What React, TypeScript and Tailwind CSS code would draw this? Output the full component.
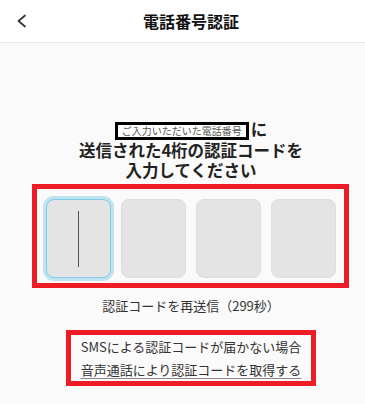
const font = { fontFamily: '"Noto Sans CJK JP", "Noto Sans", sans-serif' };

function CodeBox({ active }: { active?: boolean }) {
  return (
    <div
      className={
        "flex h-[79px] w-[65px] items-center justify-center rounded-[8px] border bg-[#e4e4e4] " +
        (active
          ? "border-[#7ccbea] ring-[3px] ring-[#bfe3ef]"
          : "border-[#dcdde2]")
      }
    >
      {active && <div className="h-[56px] w-[1.5px] bg-[#555]" />}
    </div>
  );
}

export default function App() {
  return (
    <div className="min-h-screen w-full overflow-hidden bg-[#fafafa]" style={font}>
      <div className="w-[382px]">
        {/* Header */}
        <header className="relative flex h-[43px] items-center justify-center border-b border-[#e8e8e8] bg-white">
          <svg
            className="absolute left-[16px] top-[14px] h-[14px] w-[12px]"
            viewBox="0 0 12 14"
            fill="none"
            stroke="#333"
            strokeWidth={1.7}
            strokeLinecap="round"
            strokeLinejoin="round"
          >
            <polyline points="9,1.5 2.5,7 9,12.5" />
          </svg>
          <h1 className="text-[16px] font-bold text-[#111]">電話番号認証</h1>
        </header>

        {/* Heading */}
        <div className="mt-[76px] text-center text-[16.5px] font-bold leading-[20px] text-[#222]">
          <p>
            <span className="mr-[2px] inline-block h-[18px] border-[3px] border-black bg-white px-[4px] align-[1px] text-[10px] font-normal leading-[12px] text-[#555]">
              ご入力いただいた電話番号
            </span>
            に
          </p>
          <p>送信された4桁の認証コードを</p>
          <p>入力してください</p>
        </div>

        {/* Code inputs */}
        <div className="ml-[32px] mt-[4px] flex w-[317px] gap-[10px] border-[5px] border-[#ee1c25] pb-[5px] pl-[9px] pr-[8px] pt-[10px]">
          <CodeBox active />
          <CodeBox />
          <CodeBox />
          <CodeBox />
        </div>

        <p className="mt-[8px] text-center text-[13px] leading-[20px] text-[#333]">
          認証コードを再送信（299秒）
        </p>

        {/* Voice call */}
        <div className="ml-[66px] mt-[14px] flex w-[250px] flex-col items-center border-[5px] border-[#ee1c25] text-[13px] leading-[23px] text-[#333]">
          <p>SMSによる認証コードが届かない場合</p>
          <a className="underline decoration-[#888] underline-offset-[3px]">
            音声通話により認証コードを取得する
          </a>
        </div>
      </div>
    </div>
  );
}
